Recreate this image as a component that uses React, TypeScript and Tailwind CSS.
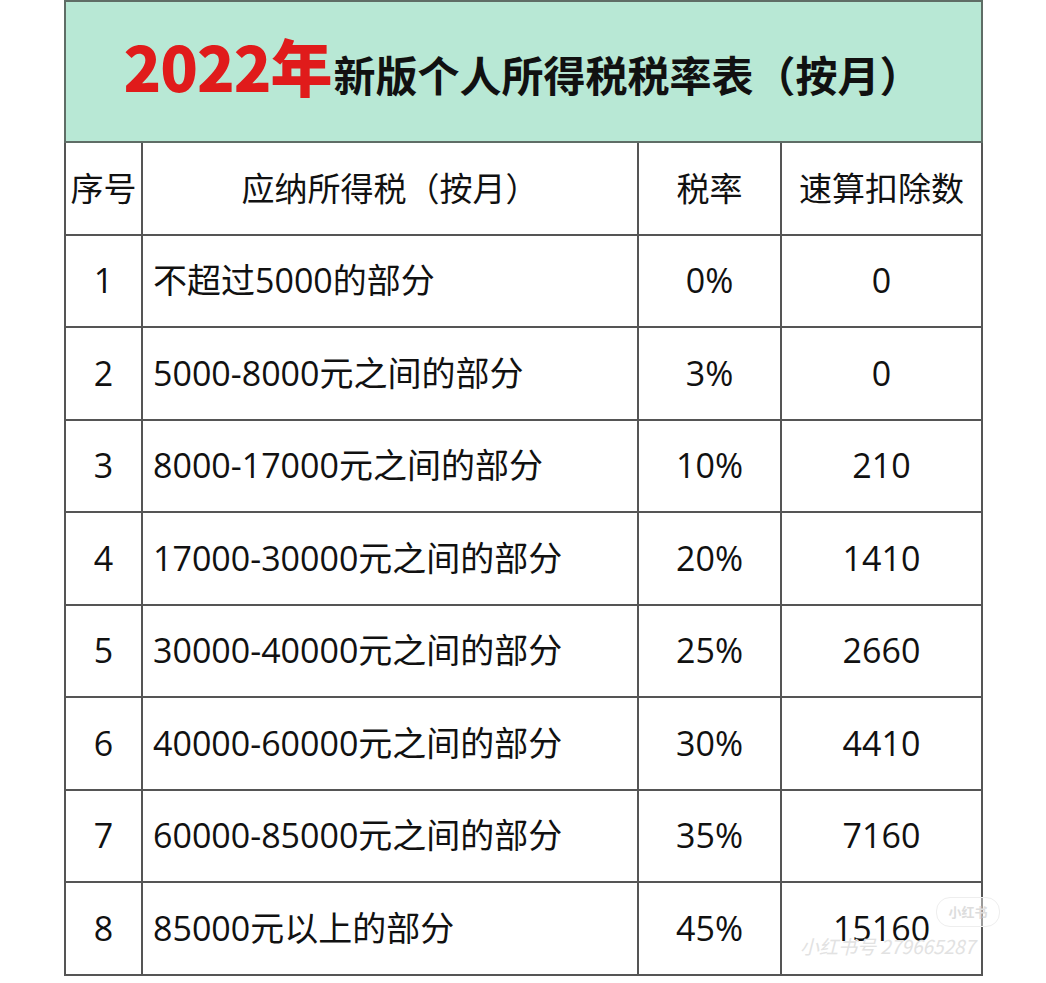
const rows = [
  { no: "1", range: "不超过5000的部分", rate: "0%", deduct: "0" },
  { no: "2", range: "5000-8000元之间的部分", rate: "3%", deduct: "0" },
  { no: "3", range: "8000-17000元之间的部分", rate: "10%", deduct: "210" },
  { no: "4", range: "17000-30000元之间的部分", rate: "20%", deduct: "1410" },
  { no: "5", range: "30000-40000元之间的部分", rate: "25%", deduct: "2660" },
  { no: "6", range: "40000-60000元之间的部分", rate: "30%", deduct: "4410" },
  { no: "7", range: "60000-85000元之间的部分", rate: "35%", deduct: "7160" },
  { no: "8", range: "85000元以上的部分", rate: "45%", deduct: "15160" },
];

const cellFont = { fontFamily: '"Open Sans", "Noto Sans CJK SC", sans-serif' };

export default function App() {
  return (
    <div className="relative w-[1046px] h-[983px] bg-white" style={cellFont}>
      <div className="pl-[64px]">
        <table className="w-[917px] border-collapse text-[#111] table-fixed">
          <colgroup>
            <col className="w-[77px]" />
            <col className="w-[496px]" />
            <col className="w-[143px]" />
            <col className="w-[201px]" />
          </colgroup>
          <thead>
            {/* Title band */}
            <tr className="h-[141px] bg-[#b8e8d5]">
              <th colSpan={4} className="border-2 border-[#5f6d66] p-0">
                <div
                  className="flex items-baseline justify-center pr-[2px] pb-[14px]"
                  style={{ fontFamily: '"Noto Sans CJK SC", sans-serif' }}
                >
                  <span className="text-[62px] font-black text-[#e01b1b] leading-none tracking-[-1px]">
                    2022年
                  </span>
                  <span className="text-[42px] font-bold text-[#111] leading-none ml-[2px]">
                    新版个人所得税税率表（按月）
                  </span>
                </div>
              </th>
            </tr>
            <tr className="h-[92.5px]">
              <th className="border-2 border-[#555] p-0 text-[33px] font-normal text-center">序号</th>
              <th className="border-2 border-[#555] p-0 text-[33px] font-normal text-center">应纳所得税（按月）</th>
              <th className="border-2 border-[#555] p-0 text-[33px] font-normal text-center">税率</th>
              <th className="border-2 border-[#555] p-0 text-[33px] font-normal text-center">速算扣除数</th>
            </tr>
          </thead>
          <tbody>
            {rows.map((r) => (
              <tr key={r.no} className="h-[92.5px] text-[34px]">
                <td className="border-2 border-[#555] p-0 text-center">{r.no}</td>
                <td className="border-2 border-[#555] pl-[10px] whitespace-nowrap">{r.range}</td>
                <td className="border-2 border-[#555] p-0 text-center">{r.rate}</td>
                <td className="border-2 border-[#555] p-0 text-center">{r.deduct}</td>
              </tr>
            ))}
          </tbody>
        </table>
      </div>

      {/* watermark */}
      <div
        className="absolute left-[936px] top-[897px] w-[64px] h-[30px] rounded-[14px] bg-white/40 border border-[#eee] flex items-center justify-center text-[13px] text-[#ddd] font-bold"
        style={{ fontFamily: '"Noto Sans CJK SC", sans-serif' }}
      >
        小红书
      </div>
      <div
        className="absolute left-[800px] top-[932px] text-[19px] text-[#e2e2e2] whitespace-nowrap italic"
        style={{ fontFamily: '"Noto Sans CJK SC", sans-serif' }}
      >
        小红书号 279665287
      </div>
    </div>
  );
}
